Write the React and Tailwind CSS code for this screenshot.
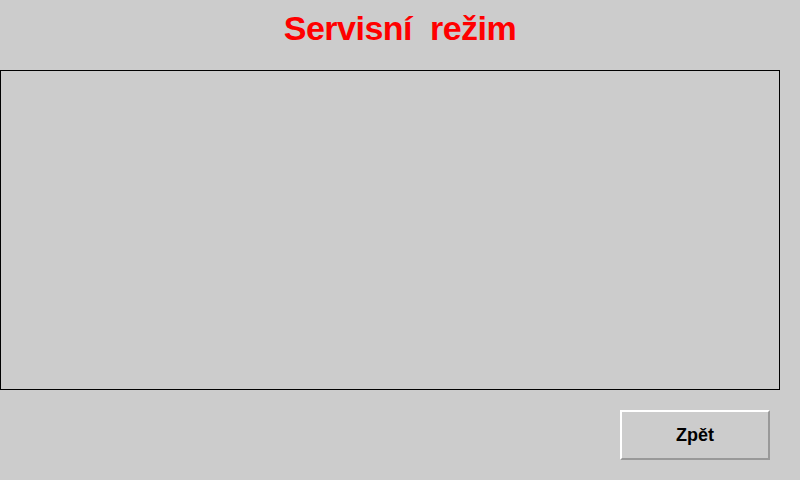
export default function App() {
  return (
    <div
      className="w-[800px] h-[480px] bg-[#cccccc] flex flex-col overflow-hidden"
      style={{ fontFamily: '"Liberation Sans", Arial, sans-serif' }}
    >
      <div className="h-[70px] flex items-center justify-center pb-[14px]">
        <h1 className="text-[34px] leading-none font-bold text-[#ff0000] whitespace-pre tracking-[-0.5px]">
          {'Servisní  režim'}
        </h1>
      </div>
      <div className="w-[780px] h-[320px] border border-black" />
      <div className="flex justify-end pr-[30px] pt-[20px]">
        <button className="w-[150px] h-[50px] border-2 border-t-white border-l-white border-b-[#999999] border-r-[#999999] bg-[#cccccc] text-[18px] font-bold text-black">
          Zpět
        </button>
      </div>
    </div>
  )
}
